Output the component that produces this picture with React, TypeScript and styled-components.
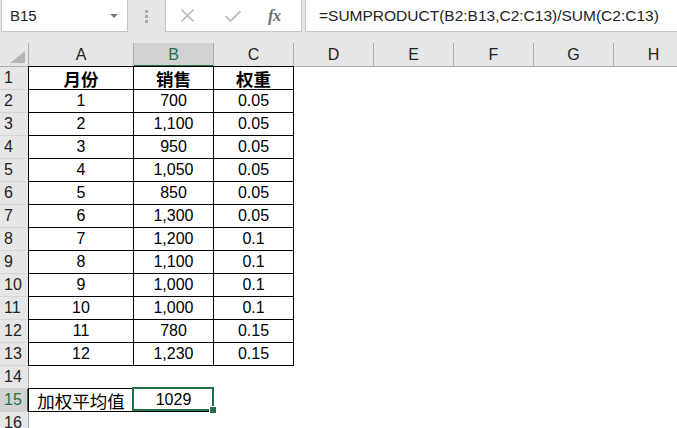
import styled, { createGlobalStyle } from "styled-components"

const GlobalStyle = createGlobalStyle`
  html, body {
    margin: 0;
    padding: 0;
    background: #fff;
    overflow: hidden;
  }
  * { box-sizing: border-box; }
`

const GREEN = "#217346"

// Styles
const Sheet = styled.div`
  width: 677px;
  height: 428px;
  overflow: hidden;
  font-family: "Liberation Sans", Arial, sans-serif;
`
const TopBar = styled.div`
  display: flex;
  align-items: flex-start;
  height: 43px;
  background: #e6e6e6;
`
const NameBox = styled.div`
  position: relative;
  margin-left: 1px;
  width: 127px;
  height: 32px;
  background: #fff;
  border: 1px solid #c6c6c6;
  border-top: none;
  display: flex;
  align-items: center;
  padding-left: 8px;
  font-size: 15px;
  color: #222;
`
const DropArrow = styled.span`
  position: absolute;
  right: 9px;
  top: 14px;
  width: 0;
  height: 0;
  border-left: 4px solid transparent;
  border-right: 4px solid transparent;
  border-top: 4px solid #777;
`
const Grip = styled.div`
  width: 37px;
  height: 32px;
  display: flex;
  flex-direction: column;
  align-items: center;
  justify-content: center;
  gap: 2px;
  span {
    width: 3px;
    height: 3px;
    background: #a9a9a9;
  }
`
const FxButtons = styled.div`
  width: 137px;
  height: 32px;
  background: #fff;
  border: 1px solid #c6c6c6;
  border-top: none;
  display: flex;
  align-items: center;
  padding-left: 14px;
  gap: 29px;
`
const FxLabel = styled.span`
  font-family: "Liberation Serif", "Times New Roman", serif;
  font-style: italic;
  font-weight: bold;
  font-size: 17px;
  color: #707070;
  letter-spacing: -1px;
  margin-left: -3px;
`
const FormulaInput = styled.div`
  flex: 1;
  margin-left: 3px;
  height: 32px;
  background: #fff;
  border: 1px solid #c6c6c6;
  border-top: none;
  border-right: none;
  display: flex;
  align-items: center;
  padding-left: 13px;
  font-size: 15.5px;
  color: #222;
  white-space: nowrap;
`
const Row = styled.div`
  display: flex;
  height: 23px;
  white-space: nowrap;
`
const HeaderRow = styled(Row)`
  height: 24px;
`
const Corner = styled.div`
  position: relative;
  flex: 0 0 29px;
  background: #e6e6e6;
  border-right: 1px solid #ababab;
  border-bottom: 1px solid #ababab;
  &::after {
    content: "";
    position: absolute;
    right: 3px;
    bottom: 3px;
    border-left: 15px solid transparent;
    border-bottom: 12px solid #b6b6b6;
  }
`
const ColHeader = styled.div<{ $w: number; $sel?: boolean }>`
  flex: 0 0 ${p => p.$w}px;
  background: ${p => (p.$sel ? "#d2d2d2" : "#e6e6e6")};
  color: ${p => (p.$sel ? GREEN : "#222")};
  border-right: 1px solid #ababab;
  border-bottom: ${p => (p.$sel ? `2px solid ${GREEN}` : "1px solid #ababab")};
  display: flex;
  align-items: center;
  justify-content: center;
  font-size: 16px;
  padding-top: ${p => (p.$sel ? "1px" : "0")};
`
const RowHeader = styled.div<{ $sel?: boolean }>`
  flex: 0 0 29px;
  background: ${p => (p.$sel ? "#d2d2d2" : "#e6e6e6")};
  color: ${p => (p.$sel ? GREEN : "#222")};
  border-right: ${p => (p.$sel ? `2px solid ${GREEN}` : "1px solid #ababab")};
  border-bottom: 1px solid #d4d4d4;
  display: flex;
  align-items: center;
  padding-left: 4px;
  font-size: 16px;
`
const Cell = styled.div<{ $w: number; $border?: boolean; $cjk?: boolean; $bold?: boolean }>`
  position: relative;
  flex: 0 0 ${p => p.$w}px;
  border-right: 1px solid ${p => (p.$border ? "#000" : "transparent")};
  border-bottom: 1px solid ${p => (p.$border ? "#000" : "transparent")};
  box-shadow: ${p => (p.$border ? "-1px 0 0 #000, 0 -1px 0 #000, -1px -1px 0 #000" : "none")};
  display: flex;
  align-items: center;
  justify-content: center;
  font-family: ${p =>
    p.$cjk ? `"Noto Sans CJK SC", sans-serif` : `"Liberation Sans", Arial, sans-serif`};
  font-size: ${p => (p.$cjk ? "17.5px" : "16px")};
  font-weight: ${p => (p.$bold ? 700 : 400)};
  color: #000;
`
const Selection = styled.div`
  position: absolute;
  left: -2px;
  top: -2px;
  right: -1px;
  bottom: 0;
  border: 2px solid ${GREEN};
  pointer-events: none;
  &::after {
    content: "";
    position: absolute;
    right: -4px;
    bottom: -4px;
    width: 6px;
    height: 6px;
    background: ${GREEN};
    border: 1px solid #fff;
    border-right: none;
    border-bottom: none;
  }
`

const COLS = [
  { name: "A", w: 105 },
  { name: "B", w: 80 },
  { name: "C", w: 80 },
  { name: "D", w: 80 },
  { name: "E", w: 80 },
  { name: "F", w: 80 },
  { name: "G", w: 80 },
  { name: "H", w: 80 },
]

const table: string[][] = [
  ["月份", "销售", "权重"],
  ["1", "700", "0.05"],
  ["2", "1,100", "0.05"],
  ["3", "950", "0.05"],
  ["4", "1,050", "0.05"],
  ["5", "850", "0.05"],
  ["6", "1,300", "0.05"],
  ["7", "1,200", "0.1"],
  ["8", "1,100", "0.1"],
  ["9", "1,000", "0.1"],
  ["10", "1,000", "0.1"],
  ["11", "780", "0.15"],
  ["12", "1,230", "0.15"],
  [],
  ["加权平均值", "1029"],
  [],
]

const isCjk = (s: string) => /[\u4e00-\u9fff]/.test(s)

const CancelIcon = () => (
  <svg width="15" height="15" viewBox="0 0 15 15">
    <path d="M1.5 1.5 L13.5 13.5 M13.5 1.5 L1.5 13.5" stroke="#b8b8b8" strokeWidth="1.6" fill="none" />
  </svg>
)

const CheckIcon = () => (
  <svg width="18" height="14" viewBox="0 0 18 14">
    <path d="M1.5 7 L6.5 12 L16.5 2" stroke="#c4c4c4" strokeWidth="2.2" fill="none" />
  </svg>
)

const App: React.FC = () => {
  return (
    <>
      <GlobalStyle />
      <Sheet>
        <TopBar>
          <NameBox>
            B15
            <DropArrow />
          </NameBox>
          <Grip>
            <span />
            <span />
            <span />
          </Grip>
          <FxButtons>
            <CancelIcon />
            <CheckIcon />
            <FxLabel>fx</FxLabel>
          </FxButtons>
          <FormulaInput>=SUMPRODUCT(B2:B13,C2:C13)/SUM(C2:C13)</FormulaInput>
        </TopBar>

        <HeaderRow>
          <Corner />
          {COLS.map(c => (
            <ColHeader key={c.name} $w={c.w} $sel={c.name === "B"}>
              {c.name}
            </ColHeader>
          ))}
        </HeaderRow>

        {table.map((row, r) => {
          const rowNo = r + 1
          return (
            <Row key={rowNo}>
              <RowHeader $sel={rowNo === 15}>{rowNo}</RowHeader>
              {COLS.map((c, ci) => {
                const value = row[ci] ?? ""
                const bordered = ci < 3 && (rowNo <= 13 || (rowNo === 15 && ci < 2))
                return (
                  <Cell
                    key={c.name}
                    $w={c.w}
                    $border={bordered}
                    $cjk={isCjk(value)}
                    $bold={rowNo === 1}
                  >
                    {value}
                    {rowNo === 15 && c.name === "B" && <Selection />}
                  </Cell>
                )
              })}
            </Row>
          )
        })}
      </Sheet>
    </>
  )
}

export default App
